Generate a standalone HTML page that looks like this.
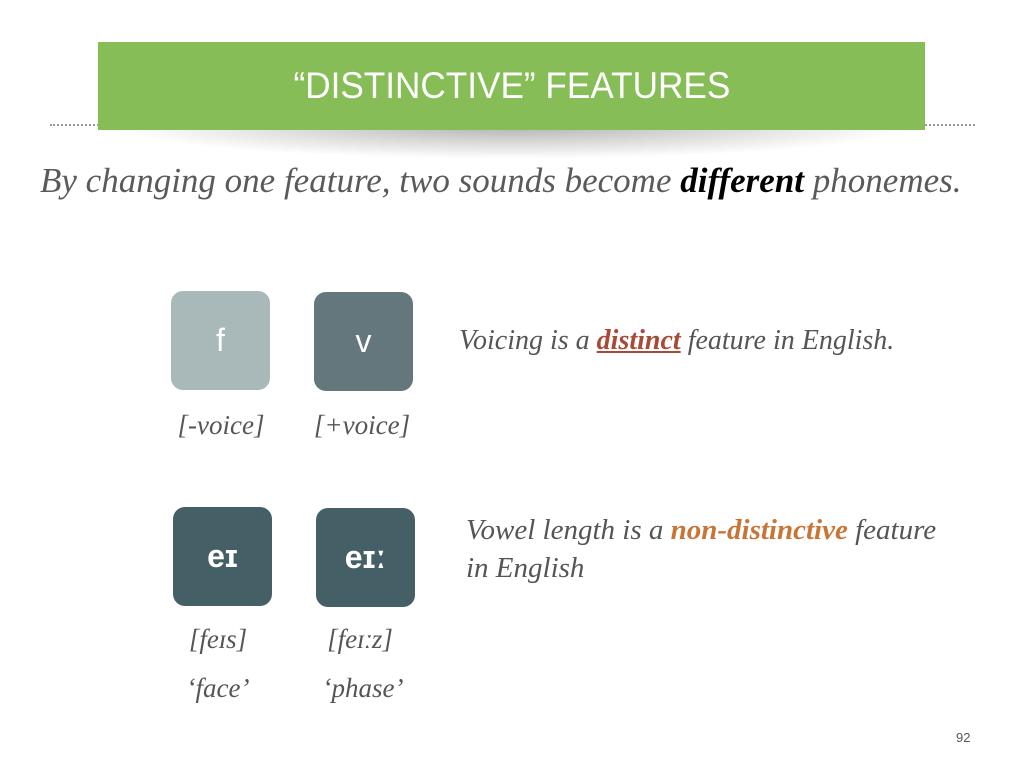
<!DOCTYPE html>
<html><head><meta charset="utf-8"><style>
body{margin:0;width:1024px;height:768px;background:#fff;position:relative;overflow:hidden;font-family:"Liberation Serif",serif;}
.a{position:absolute;white-space:nowrap}
.dots{position:absolute;top:124px;left:50px;width:925px;border-top:2px dotted #999;}
.shadow{position:absolute;left:110px;top:115px;width:805px;height:44px;border-radius:50%;background:radial-gradient(ellipse at 50% 25%,rgba(0,0,0,.3),rgba(0,0,0,0) 70%);}
.bar{position:absolute;left:98px;top:42px;width:827px;height:88px;background:#86bd57;}
.title{position:absolute;left:98px;width:827px;top:65px;text-align:center;color:#fff;font-family:"Liberation Sans",sans-serif;font-size:37px;}
.title span{display:inline-block;transform:scaleX(.95)}
.sub{left:40px;top:161px;font-size:35px;font-style:italic;color:#5a5a5a;}
.box{position:absolute;width:99px;height:99px;border-radius:12px;color:#fff;font-family:"Liberation Sans",sans-serif;font-size:32px;text-align:center;line-height:99px}
.lab{position:absolute;width:140px;text-align:center;font-style:italic;font-size:27px;color:#555}
.t{font-style:italic;font-size:28px;color:#555}
</style></head><body>
<div class="dots"></div>
<div class="shadow"></div>
<div class="bar"></div>
<div class="title"><span>“DISTINCTIVE” FEATURES</span></div>
<div class="a sub">By changing one feature, two sounds become <b style="color:#000">different</b> phonemes.</div>

<div class="box" style="left:171px;top:291px;background:#a9b8b8">f</div>
<div class="box" style="left:314px;top:292px;background:#64777d">v</div>
<div class="box" style="left:173px;top:507px;background:#455f66;font-weight:bold">eɪ</div>
<div class="box" style="left:316px;top:508px;background:#455f66;font-weight:bold">eɪː</div>

<div class="lab" style="left:151px;top:410px">[-voice]</div>
<div class="lab" style="left:292px;top:410px">[+voice]</div>
<div class="lab" style="left:148px;top:624px">[feɪs]</div>
<div class="lab" style="left:290px;top:624px">[feɪːz]</div>
<div class="lab" style="left:148px;top:673px">‘face’</div>
<div class="lab" style="left:293px;top:673px">‘phase’</div>

<div class="a t" style="left:459px;top:325px">Voicing is a <b style="color:#a84a35;text-decoration:underline">distinct</b> feature in English.</div>
<div class="a t" style="left:466px;top:514px;font-size:29px">Vowel length is a <b style="color:#c87537">non-distinctive</b> feature</div>
<div class="a t" style="left:466px;top:552px;font-size:29px">in English</div>
<div class="a" style="left:956px;top:730px;font-size:13px;color:#555;font-family:'Liberation Sans',sans-serif">92</div>
</body></html>
